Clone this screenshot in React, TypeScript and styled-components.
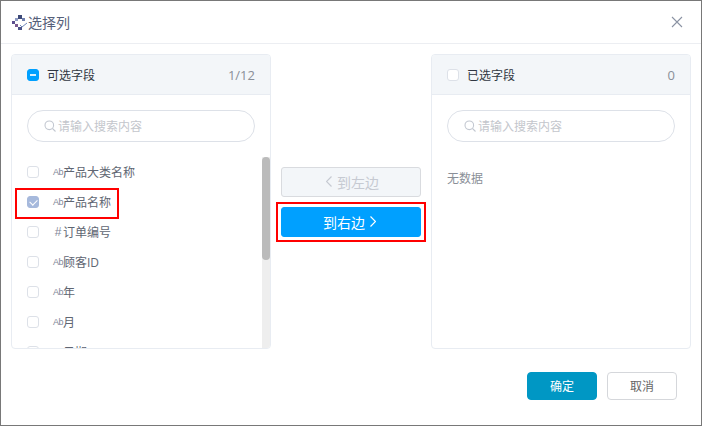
import React from 'react';
import styled, { createGlobalStyle } from 'styled-components';

const GlobalStyle = createGlobalStyle`
  html, body {
    margin: 0;
    padding: 0;
    background: #fff;
  }
  body {
    font-family: "Open Sans", "Noto Sans CJK SC", sans-serif;
    font-size: 12px;
  }
  * {
    box-sizing: border-box;
  }
`;

const FIELDS = [
  { kind: 'text', name: '产品大类名称' },
  { kind: 'text', name: '产品名称', checked: true, marked: true },
  { kind: 'number', name: '订单编号' },
  { kind: 'text', name: '顾客ID' },
  { kind: 'text', name: '年' },
  { kind: 'text', name: '月' },
  { kind: 'text', name: '日期' },
];

const SearchIcon = () => (
  <svg width="12" height="12" viewBox="0 0 12 12" fill="none" stroke="#c3c8d1" strokeWidth="1.1">
    <circle cx="5.3" cy="5.3" r="4.3" />
    <path d="M8.5 8.5l3 3" />
  </svg>
);

const SearchBox = () => (
  <SearchField>
    <SearchIcon />
    <SearchText>请输入搜索内容</SearchText>
  </SearchField>
);

const App: React.FC = () => {
  return (
    <Dialog>
      <GlobalStyle />
      <Header>
        <Title>
          <svg width="15" height="15" viewBox="0 0 15 15">
            <rect x="6" y="0" width="4" height="4" fill="#3e4a78" />
            <rect x="3" y="3" width="3" height="3" fill="#8f9cc4" />
            <rect x="10" y="3" width="3" height="3" fill="#6f7fae" />
            <rect x="0" y="6" width="3" height="3" fill="#5b4f8f" />
            <rect x="3" y="9" width="3" height="3" fill="#7b5a90" />
            <rect x="6" y="12" width="4" height="3" fill="#4a5288" />
            <path d="M8 10l2 2 5-4" fill="none" stroke="#6f86b8" strokeWidth="1" />
          </svg>
          <span>选择列</span>
        </Title>
        <svg width="12" height="12" viewBox="0 0 12 12" stroke="#8b93a3" strokeWidth="1.1">
          <path d="M1 1l10 10M11 1L1 11" />
        </svg>
      </Header>

      <Body>
        <Panel>
          <PanelHeader>
            <Check $state="partial" />
            <PanelTitle>可选字段</PanelTitle>
            <Count>1/12</Count>
          </PanelHeader>
          <SearchBox />
          <List>
            {FIELDS.map((field) => (
              <Row key={field.name}>
                <Check $state={field.checked ? 'checked' : 'empty'} />
                <TypeMark $number={field.kind === 'number'}>
                  {field.kind === 'number' ? '#' : 'Ab'}
                </TypeMark>
                <span>{field.name}</span>
                {field.marked && <RowMarker />}
              </Row>
            ))}
            <ScrollTrack>
              <ScrollThumb />
            </ScrollTrack>
          </List>
        </Panel>

        <Transfer>
          <MoveButton disabled $side="left">
            <svg width="6" height="11" viewBox="0 0 6 11" fill="none" stroke="#c6cad2" strokeWidth="1.2">
              <path d="M5.5 .5l-5 5 5 5" />
            </svg>
            到左边
          </MoveButton>
          <MoveButton $primary $side="right">
            到右边
            <svg width="6" height="11" viewBox="0 0 6 11" fill="none" stroke="#fff" strokeWidth="1.2">
              <path d="M.5 .5l5 5-5 5" />
            </svg>
            <ButtonMarker />
          </MoveButton>
        </Transfer>

        <Panel>
          <PanelHeader>
            <Check $state="empty" />
            <PanelTitle>已选字段</PanelTitle>
            <Count>0</Count>
          </PanelHeader>
          <SearchBox />
          <Empty>无数据</Empty>
        </Panel>
      </Body>

      <Footer>
        <FooterButton $primary>确定</FooterButton>
        <FooterButton>取消</FooterButton>
      </Footer>
    </Dialog>
  );
};

const Dialog = styled.div`
  width: 702px;
  height: 426px;
  border: 1px solid #787878;
  background: #fff;
  display: flex;
  flex-direction: column;
  overflow: hidden;
`;

const Header = styled.div`
  height: 43px;
  flex: none;
  display: flex;
  align-items: center;
  justify-content: space-between;
  padding: 0 18px 0 11px;
  border-bottom: 1px solid #eceef2;
`;

const Title = styled.div`
  display: flex;
  align-items: center;
  gap: 1px;
  font-size: 14px;
  color: #56607a;
`;

const Body = styled.div`
  display: flex;
  padding: 10px 10px 0;
  height: 305px;
  flex: none;
`;

const Panel = styled.div`
  width: 260px;
  height: 295px;
  flex: none;
  border: 1px solid #e8ecf2;
  border-radius: 4px;
  display: flex;
  flex-direction: column;
  overflow: hidden;
`;

const PanelHeader = styled.div`
  height: 40px;
  flex: none;
  display: flex;
  align-items: center;
  padding: 0 15px;
  background: #f3f6f9;
  border-bottom: 1px solid #e8ecf2;
`;

const PanelTitle = styled.span`
  margin-left: 8px;
  color: #303642;
  flex: 1;
`;

const Count = styled.span`
  font-size: 13px;
  color: #8a8f98;
`;

const Check = styled.span<{ $state: 'empty' | 'checked' | 'partial' }>`
  position: relative;
  width: 12px;
  height: 12px;
  flex: none;
  border-radius: 3px;
  border: 1px solid
    ${(p) => (p.$state === 'partial' ? '#00a0ff' : p.$state === 'checked' ? '#a6b9dc' : '#dde1e8')};
  background: ${(p) => (p.$state === 'partial' ? '#00a0ff' : p.$state === 'checked' ? '#a6b9dc' : '#fff')};

  &::after {
    content: '';
    position: absolute;
    display: ${(p) => (p.$state === 'empty' ? 'none' : 'block')};
    ${(p) =>
      p.$state === 'partial'
        ? `left: 2px; top: 4px; width: 6px; height: 2px; background: #d8effc;`
        : `left: 3px; top: 1px; width: 4px; height: 6px; border: solid #fff; border-width: 0 1px 1px 0; transform: rotate(45deg);`}
  }
`;

const SearchField = styled.div`
  width: 228px;
  height: 32px;
  flex: none;
  margin: 15px 0 15px 15px;
  padding: 0 16px;
  display: flex;
  align-items: center;
  gap: 2px;
  border: 1px solid #dde1e8;
  border-radius: 16px;
`;

const SearchText = styled.span`
  color: #c3c6cc;
`;

const List = styled.div`
  position: relative;
  flex: 1;
  min-height: 0;
  overflow: hidden;
`;

const ScrollTrack = styled.div`
  position: absolute;
  top: 0;
  right: 0;
  bottom: 0;
  width: 8px;
  background: #eeeeee;
`;

const ScrollThumb = styled.div`
  height: 103px;
  border-radius: 4px;
  background: #bbbbbb;
`;

const Row = styled.div`
  position: relative;
  height: 30px;
  display: flex;
  align-items: center;
  padding-left: 15px;
  color: #606672;
`;

const TypeMark = styled.span<{ $number?: boolean }>`
  width: 10px;
  margin-left: 14px;
  font-family: "Liberation Sans", sans-serif;
  font-size: ${(p) => (p.$number ? '12px' : '9px')};
  letter-spacing: ${(p) => (p.$number ? '0' : '-0.6px')};
  color: #7f8799;
  text-align: center;
`;

const RowMarker = styled.span`
  position: absolute;
  left: 3px;
  top: 1px;
  width: 104px;
  height: 31px;
  border: 2px solid #f00;
`;

const Transfer = styled.div`
  width: 160px;
  flex: none;
  display: flex;
  flex-direction: column;
  justify-content: center;
  align-items: center;
  gap: 10px;
`;

const MoveButton = styled.button<{ $primary?: boolean; $side: 'left' | 'right' }>`
  position: relative;
  width: 140px;
  height: 30px;
  display: flex;
  align-items: center;
  justify-content: center;
  gap: 5px;
  padding: ${(p) => (p.$side === 'left' ? '0 0 0 3px' : '0 3px 0 0')};
  font-family: inherit;
  font-size: 14px;
  border-radius: 3px;
  border: 1px solid ${(p) => (p.$primary ? '#00a0ff' : '#d9dbdf')};
  background: ${(p) => (p.$primary ? '#00a0ff' : '#f3f6f9')};
  color: ${(p) => (p.$primary ? '#fff' : '#c6cad2')};
`;

const ButtonMarker = styled.span`
  position: absolute;
  left: -6px;
  top: -6px;
  width: 150px;
  height: 40px;
  border: 2px solid #f00;
`;

const Empty = styled.div`
  padding: 12px 15px;
  color: #8a8f98;
`;

const Footer = styled.div`
  flex: 1;
  display: flex;
  justify-content: flex-end;
  gap: 10px;
  padding: 23px 24px 0 0;
`;

const FooterButton = styled.button<{ $primary?: boolean }>`
  width: 70px;
  height: 28px;
  padding: 0;
  font-family: inherit;
  font-size: 12px;
  border-radius: 4px;
  border: 1px solid ${(p) => (p.$primary ? '#0097c4' : '#d5d7db')};
  background: ${(p) => (p.$primary ? '#0097c4' : '#fff')};
  color: ${(p) => (p.$primary ? '#fff' : '#666')};
`;

export default App;
